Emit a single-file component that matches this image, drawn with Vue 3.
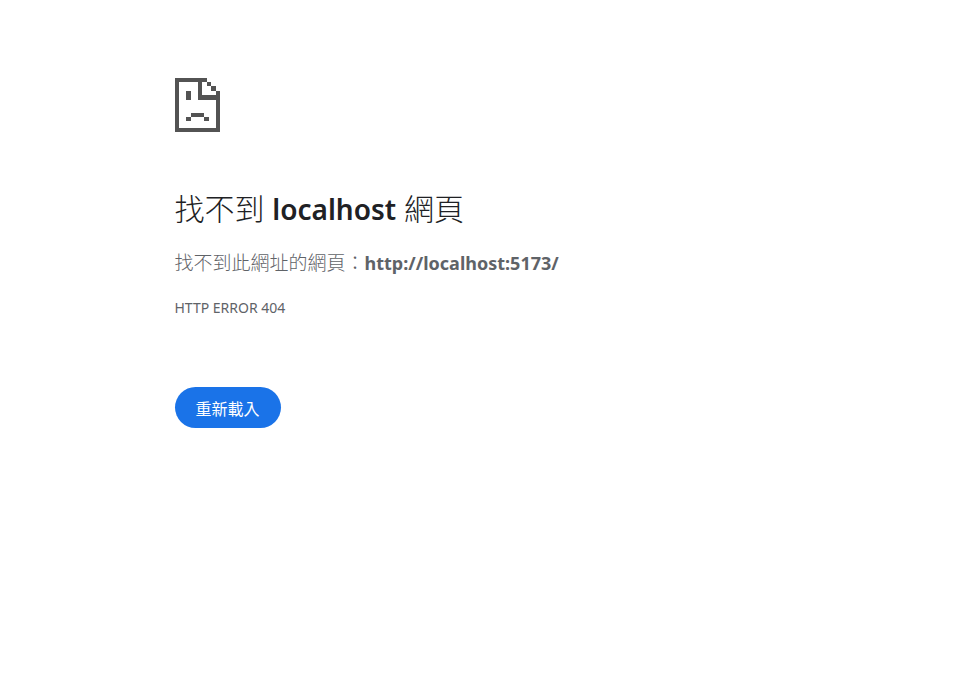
<script setup>
const host = 'localhost'
const url = 'http://localhost:5173/'
const reload = () => window.location.reload()
</script>

<template>
  <main class="page">
    <svg class="icon" viewBox="0 0 45 54" aria-hidden="true" shape-rendering="crispEdges">
      <g fill="#535353">
        <path fill-rule="evenodd" d="M0 0H32V4H27V17H41V13H45V54H0ZM4 4V50H41V22H23V4Z" />
        <path d="M32 4h4v4h-4zM36 8h5v5h-5z" />
        <path d="M11 13h5v9h-5z" />
        <path d="M16 35h13v4h-13zM11 39h5v4h-5zM29 39h5v4h-5z" />
      </g>
    </svg>
    <h1>找不到 <span class="host">{{ host }}</span> 網頁</h1>
    <p class="summary">找不到此網址的網頁：<strong>{{ url }}</strong></p>
    <p class="code">HTTP ERROR 404</p>
    <button type="button" class="reload" @click="reload">重新載入</button>
  </main>
</template>

<style>
body {
  background: #fff;
}
</style>

<style scoped>
.page {
  box-sizing: border-box;
  width: 100%;
  max-width: 620px;
  margin: 0 auto;
  padding-top: 78px;
  font-family: "Noto Sans", "Noto Sans CJK TC", sans-serif;
  color: #5f6368;
}
.icon {
  display: block;
  width: 45px;
  height: 54px;
}
h1 {
  margin: 57px 0 0;
  font-size: 30px;
  line-height: 40px;
  font-weight: 300;
  color: #202124;
}
.host {
  font-size: 28px;
  font-weight: 600;
}
.summary {
  margin: 19px 0 0;
  font-size: 19px;
  line-height: 30px;
  font-weight: 300;
}
.summary strong {
  font-size: 18px;
  font-weight: 700;
}
.code {
  margin: 20px 0 0;
  font-size: 14px;
  line-height: 20px;
  font-weight: 400;
}
.reload {
  margin-top: 69px;
  padding: 0 21px;
  height: 41px;
  border: 0;
  border-radius: 21px;
  background: #1a73e8;
  color: #fff;
  font: 400 16px "Noto Sans CJK TC", sans-serif;
  cursor: pointer;
}
</style>
